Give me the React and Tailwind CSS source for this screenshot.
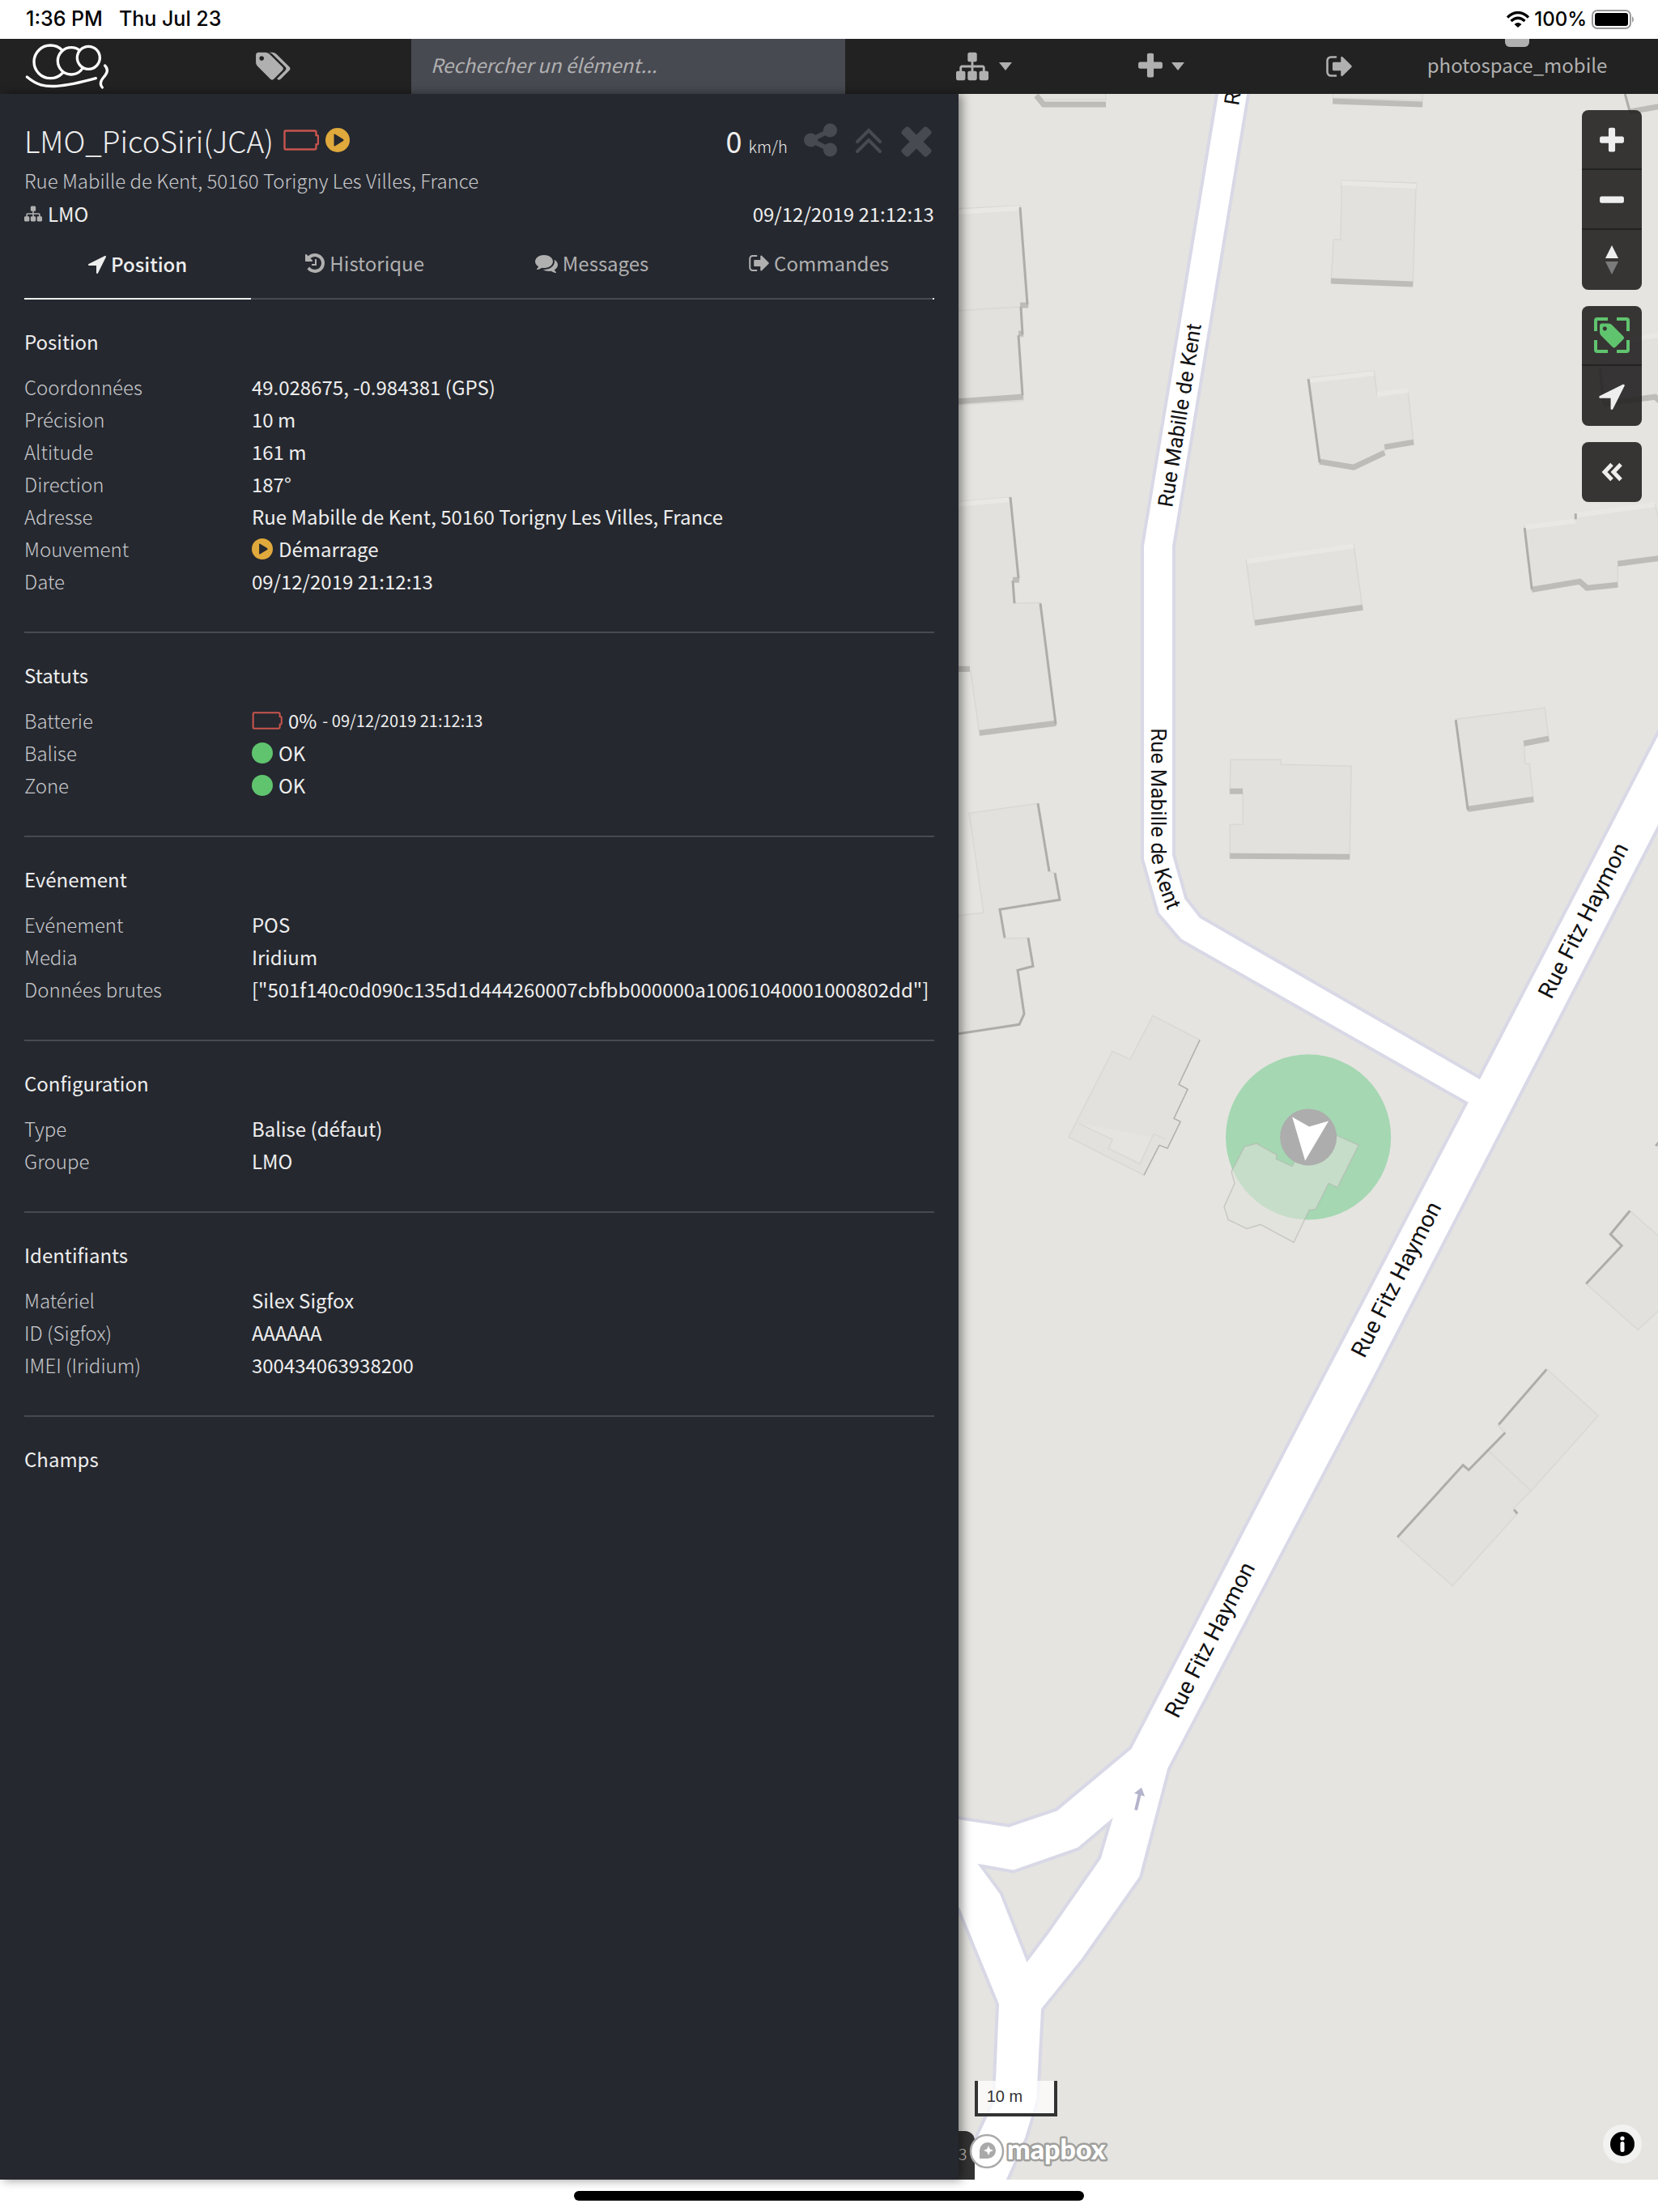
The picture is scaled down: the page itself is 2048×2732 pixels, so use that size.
const icons = {
  tags: { w: 1920, d: 'M448 448q0-53-37.5-90.5T320 320t-90.5 37.5T192 448t37.5 90.5T320 576t90.5-37.5T448 448zm1067 576q0 53-37 90l-491 492q-39 37-91 37-53 0-90-37L91 890q-38-37-64.5-101T0 672V256q0-52 38-90t90-38h416q53 0 117 26.5T763 219l715 714q37 39 37 91zm384 0q0 53-37 90l-491 492q-39 37-91 37-36 0-59-14t-53-45l470-470q37-37 37-90 0-52-37-91L923 219q-38-38-102-64.5T704 128h224q53 0 117 26.5t102 64.5l715 714q37 39 37 91z' },
  tag: { w: 1536, d: 'M448 448q0-53-37.5-90.5T320 320t-90.5 37.5T192 448t37.5 90.5T320 576t90.5-37.5T448 448zm1067 576q0 53-37 90l-491 492q-39 37-91 37-53 0-90-37L91 890q-38-37-64.5-101T0 672V256q0-52 38-90t90-38h416q53 0 117 26.5T763 219l715 714q37 39 37 91z' },
  sitemap: { w: 1792, d: 'M1792 1248v320q0 40-28 68t-68 28h-320q-40 0-68-28t-28-68v-320q0-40 28-68t68-28h96V960H960v192h96q40 0 68 28t28 68v320q0 40-28 68t-68 28H736q-40 0-68-28t-28-68v-320q0-40 28-68t68-28h96V960H320v192h96q40 0 68 28t28 68v320q0 40-28 68t-68 28H96q-40 0-68-28t-28-68v-320q0-40 28-68t68-28h96V960q0-52 38-90t90-38h512V640h-96q-40 0-68-28t-28-68V224q0-40 28-68t68-28h320q40 0 68 28t28 68v320q0 40-28 68t-68 28h-96v192h512q52 0 90 38t38 90v192h96q40 0 68 28t28 68z' },
  plus: { w: 1408, d: 'M1408 736v192q0 40-28 68t-68 28H896v416q0 40-28 68t-68 28H608q-40 0-68-28t-28-68v-416H96q-40 0-68-28t-28-68V736q0-40 28-68t68-28h416V224q0-40 28-68t68-28h192q40 0 68 28t28 68v416h416q40 0 68 28t28 68z' },
  minus: { w: 1408, d: 'M1408 736v192q0 40-28 68t-68 28H96q-40 0-68-28t-28-68V736q0-40 28-68t68-28h1216q40 0 68 28t28 68z' },
  times: { w: 1408, d: 'M1298 1322q0 40-28 68l-136 136q-28 28-68 28t-68-28l-294-294-294 294q-28 28-68 28t-68-28l-136-136q-28-28-28-68t28-68l294-294-294-294q-28-28-28-68t28-68l136-136q28-28 68-28t68 28l294 294 294-294q28-28 68-28t68 28l136 136q28 28 28 68t-28 68L976 960l294 294q28 28 28 68z' },
  signOut: { w: 1568, d: 'M640 1440q0 4 1 20t.5 26.5-3 23.5-10 19.5-20.5 6.5h-320q-119 0-203.5-84.5T0 1248V544q0-119 84.5-203.5T288 256h320q13 0 22.5 9.5T640 288q0 4 1 20t.5 26.5-3 23.5-10 19.5T608 384H288q-66 0-113 47t-47 113v704q0 66 47 113t113 47h312l11.5 1 11.5 3 8 5.5 7 9 2 13.5zm928-544q0 26-19 45l-544 544q-19 19-45 19t-45-19-19-45v-288H448q-26 0-45-19t-19-45V704q0-26 19-45t45-19h448V352q0-26 19-45t45-19 45 19l544 544q19 19 19 45z' },
  arrow: { w: 1408, d: 'M1401 345l-640 1280q-17 35-57 35-5 0-15-2-22-5-35.5-22.5T640 1596v-576H64q-22 0-39.5-13.5T2 971t4-42 29-30l1280-640q13-7 29-7 27 0 45 19 15 14 18.5 34.5T1401 345z' },
  share: { w: 1536, d: 'M1216 1024q133 0 226.5 93.5T1536 1344t-93.5 226.5T1216 1664t-226.5-93.5T896 1344q0-12 2-34l-360-180q-92 86-218 86-133 0-226.5-93.5T0 896t93.5-226.5T320 576q126 0 218 86l360-180q-2-22-2-34 0-133 93.5-226.5T1216 128t226.5 93.5T1536 448t-93.5 226.5T1216 768q-126 0-218-86L638 862q2 22 2 34t-2 34l360 180q92-86 218-86z' },
  history: { w: 1536, d: 'M1536 896q0 156-61 298t-164 245-245 164-298 61q-172 0-327-72.5T177 1387q-7-10-6.5-22.5T179 1344l137-138q10-9 25-9 16 2 23 12 73 95 179 147t225 52q104 0 198.5-40.5T1130 1258t109.5-163.5T1280 896t-40.5-198.5T1130 534 966.5 424.5 768 384q-98 0-188 35.5T420 521l137 138q31 30 14 69-17 40-59 40H64q-26 0-45-19T0 704V256q0-42 40-59 39-17 69 14l130 129q107-101 244.5-156.5T768 128q156 0 298 61t245 164 164 245 61 298zM896 608v448q0 14-9 23t-23 9H544q-14 0-23-9t-9-23v-64q0-14 9-23t23-9h224V608q0-14 9-23t23-9h64q14 0 23 9t9 23z' },
  comments: { w: 1792, d: 'M1408 768q0 139-94 257t-256.5 186.5T704 1280q-86 0-176-16-124 88-278 128-36 9-86 16h-3q-11 0-20.5-8t-11.5-21q-1-3-1-6.5t.5-6.5 2-6l2.5-5 3.5-5.5 4-5 4.5-5 4-4.5q5-6 23-25t26-29.5 22.5-29 25-38.5 20.5-44q-124-72-195-177T0 768q0-139 94-257t256.5-186.5T704 256t353.5 68.5T1314 511t94 257zm384 256q0 120-71 224.5T1526 1425q10 24 20.5 44t25 38.5 22.5 29 26 29.5 23 25q1 1 4 4.5t4.5 5 4 5 3.5 5.5l2.5 5 2 6 .5 6.5-1 6.5q-3 14-13 22t-22 7q-50-7-86-16-154-40-278-128-90 16-176 16-271 0-472-132 58 4 88 4 161 0 309-45t264-129q125-92 192-212t67-254q0-77-23-152 129 71 204 178t75 230z' },
};

function Icon({ name, className }) {
  const icon = icons[name];
  return (
    <svg viewBox={`0 0 ${icon.w} 1792`} fill="currentColor" aria-hidden="true" className={className}>
      <path d={icon.d} />
    </svg>
  );
}

function Caret() {
  return (
    <svg viewBox="0 0 16 10" fill="currentColor" aria-hidden="true" className="h-[10px] w-4">
      <path d="M0 0h16L8 10z" />
    </svg>
  );
}

function EmptyBattery({ className }) {
  return (
    <svg viewBox="0 0 44 26" fill="none" stroke="#c9544e" strokeWidth="2.4" aria-hidden="true" className={className}>
      <path d="M3 1.5h35.500q2 0 2 2v3.500h.5q2 0 2 2v7.500q0 2-2 2h-.5v4q0 2-2 2h-35.500q-1.500 0-1.500-1.500v-20q0-1.500 1.500-1.500z" />
    </svg>
  );
}

function PlayCircle({ className }) {
  return (
    <svg viewBox="0 0 30 30" aria-hidden="true" className={className}>
      <circle cx="15" cy="15" r="15" fill="#e0a93c" />
      <path d="M10.500 8.500q0-1.500 1.500-.8l10 6.200q1.300 1.100 0 2.200l-10 6.200q-1.500.7-1.500-.8z" fill="#25282f" />
    </svg>
  );
}

function Dot() {
  return <span className="size-[26px] rounded-full bg-[#60c46f]" />;
}

function Logo() {
  return (
    <svg viewBox="30 35 315 180" fill="#222" stroke="#fff" strokeWidth="10" strokeLinecap="round" aria-hidden="true" className="h-[60px] w-[105px]">
      <circle cx="127" cy="108" r="61" />
      <circle cx="204" cy="105" r="50" />
      <circle cx="268" cy="93" r="42" />
      <path d="M40 164C76 194 105 201 150 198C200 195 245 183 295 169" fill="none" />
      <path d="M329 122C343 136 336 152 325 164C311 180 311 194 319 203" fill="none" />
    </svg>
  );
}

function StatusBar() {
  return (
    <div className="flex h-12 items-center justify-between bg-white pr-7 pl-8 font-['Inter',sans-serif] text-black">
      <div className="flex gap-5 text-[25px] font-medium">
        <span>1:36 PM</span>
        <span>Thu Jul 23</span>
      </div>
      <div className="flex items-center gap-[6px]">
        <svg viewBox="0 0 28 20" aria-hidden="true" className="h-5 w-7">
          <path d="M1 7.500Q14-4.500 27 7.500M5.500 12Q14 4.500 22.500 12" fill="none" stroke="#000" strokeWidth="3.300" />
          <path d="M9.500 16Q14 12 18.500 16L14 20z" />
        </svg>
        <span className="text-2xl font-medium">100%</span>
        <svg viewBox="0 0 54 24" aria-hidden="true" className="h-6 w-[54px]">
          <rect x="1" y="1" width="47" height="22" rx="6" fill="none" stroke="#999" strokeWidth="2" />
          <rect x="4" y="4" width="41" height="16" rx="3" />
          <path d="M50 8q4 4 0 8z" fill="#999" />
        </svg>
      </div>
    </div>
  );
}

function NavBar() {
  return (
    <nav className="flex h-[68px] items-stretch bg-[#222] text-[#b0b0b0]">
      <div className="flex w-[24.8%] items-center pl-[30px]">
        <a href="#home" aria-label="Accueil"><Logo /></a>
        <a href="#tags" aria-label="Balises" className="ml-[181px]"><Icon name="tags" className="h-10 w-[43px]" /></a>
      </div>
      <input
        type="search"
        aria-label="Rechercher un élément"
        placeholder="Rechercher un élément..."
        className="w-[26.2%] bg-[#484a52] px-6 pb-1 text-2xl italic placeholder:text-[#b0b0b0] focus:outline-none"
      />
      <div className="grid flex-1 grid-cols-4 pr-16 pl-[60px]">
        <button type="button" aria-label="Groupes" className="flex items-center justify-center gap-[11px]">
          <Icon name="sitemap" className="h-10 w-11" /><Caret />
        </button>
        <button type="button" aria-label="Ajouter" className="flex items-center justify-center gap-[11px]">
          <Icon name="plus" className="h-[38px] w-[30px]" /><Caret />
        </button>
        <button type="button" aria-label="Déconnexion" className="flex items-center justify-center">
          <Icon name="signOut" className="h-9 w-[34px]" />
        </button>
        <a href="#user" className="relative flex items-center justify-center pb-1 text-2xl">
          <span className="absolute top-0 left-1/2 h-[10px] w-[30px] -translate-x-1/2 rounded-b-md bg-[#b0b0b0]" />
          photospace_mobile
        </a>
      </div>
    </nav>
  );
}

const tabs = [
  { label: 'Position', icon: 'arrow', size: 'h-7 w-[22px]' },
  { label: 'Historique', icon: 'history', size: 'h-7 w-6' },
  { label: 'Messages', icon: 'comments', size: 'h-7 w-7' },
  { label: 'Commandes', icon: 'signOut', size: 'h-7 w-[25px]' },
];

const sections = [
  {
    title: 'Position',
    rows: [
      ['Coordonnées', '49.028675, -0.984381 (GPS)'],
      ['Précision', '10 m'],
      ['Altitude', '161 m'],
      ['Direction', '187°'],
      ['Adresse', 'Rue Mabille de Kent, 50160 Torigny Les Villes, France'],
      ['Mouvement', <><PlayCircle className="size-[26px]" />Démarrage</>],
      ['Date', '09/12/2019 21:12:13'],
    ],
  },
  {
    title: 'Statuts',
    rows: [
      ['Batterie', <><EmptyBattery className="h-[22px] w-[38px]" />0% <small className="text-xl">- 09/12/2019 21:12:13</small></>],
      ['Balise', <><Dot />OK</>],
      ['Zone', <><Dot />OK</>],
    ],
  },
  {
    title: 'Evénement',
    rows: [
      ['Evénement', 'POS'],
      ['Media', 'Iridium'],
      ['Données brutes', '["501f140c0d090c135d1d444260007cbfbb000000a10061040001000802dd"]'],
    ],
  },
  {
    title: 'Configuration',
    rows: [
      ['Type', 'Balise (défaut)'],
      ['Groupe', 'LMO'],
    ],
  },
  {
    title: 'Identifiants',
    rows: [
      ['Matériel', 'Silex Sigfox'],
      ['ID (Sigfox)', 'AAAAAA'],
      ['IMEI (Iridium)', '300434063938200'],
    ],
  },
  { title: 'Champs', rows: [] },
];

function Section({ title, rows }) {
  return (
    <section className="border-t-2 border-[#484a52] pt-8 pb-[42px] first:border-t-0">
      <h2 className="mb-4 leading-10 text-[#eee]">{title}</h2>
      <dl>
        {rows.map(([label, value]) => (
          <div key={label} className="flex h-10 items-center whitespace-nowrap">
            <dt className="w-1/4 shrink-0 font-light text-[#c8c9cc]">{label}</dt>
            <dd className="flex items-center gap-[7px] text-[#eee]">{value}</dd>
          </div>
        ))}
      </dl>
    </section>
  );
}

function DetailPanel() {
  return (
    <aside className="relative z-10 w-[57.8%] shrink-0 bg-[#25282f] px-[30px] pt-[30px] text-2xl shadow-[4px_0_12px_rgba(0,0,0,0.45)]">
      <header>
        <div className="flex h-[54px] items-center justify-between">
          <div className="flex items-center gap-2">
            <h1 className="mr-1 text-[37px] leading-[54px] font-light text-[#eee]">LMO_PicoSiri(JCA)</h1>
            <EmptyBattery className="h-[26px] w-11" />
            <PlayCircle className="size-[30px]" />
          </div>
          <div className="flex items-center text-[#484a52]">
            <p className="mr-5 flex items-baseline gap-2 text-[#eee]">
              <span className="text-[36px] leading-[54px]">0</span>
              <span className="text-xl font-light">km/h</span>
            </p>
            <button type="button" aria-label="Partager"><Icon name="share" className="h-12 w-[41px]" /></button>
            <button type="button" aria-label="Réduire" className="ml-[22px]">
              <svg viewBox="0 0 34 34" fill="none" stroke="currentColor" strokeWidth="4" strokeLinecap="round" aria-hidden="true" className="size-[34px]">
                <path d="M3 19L17 5l14 14M3 31L17 17l14 14" />
              </svg>
            </button>
            <button type="button" aria-label="Fermer" className="ml-[20px]"><Icon name="times" className="h-[56px] w-11" /></button>
          </div>
        </div>
        <p className="h-12 leading-[46px] font-light text-[#c8c9cc]">Rue Mabille de Kent, 50160 Torigny Les Villes, France</p>
        <div className="flex h-8 items-center justify-between text-[#eee]">
          <p className="flex items-center gap-[7px]"><Icon name="sitemap" className="h-6 w-[22px] text-[#b0b0b0]" />LMO</p>
          <p>09/12/2019 21:12:13</p>
        </div>
      </header>
      <div role="tablist" className="mt-5 flex border-b-2 border-[#484a52]">
        {tabs.map((tab, index) => (
          <button
            key={tab.label}
            type="button"
            role="tab"
            aria-selected={index === 0}
            className={
              index === 0
                ? '-mb-[2px] flex h-[70px] flex-1 items-center justify-center gap-[6px] border-b-2 border-[#eee] pb-4 font-medium text-[#eee]'
                : '-mb-[2px] flex h-[70px] flex-1 items-center justify-center gap-[6px] pb-5 text-[#b0b0b0]'
            }
          >
            <Icon name={tab.icon} className={tab.size} />
            {tab.label}
          </button>
        ))}
        <span className="-mb-[2px] h-[2px] w-[2px] self-end bg-[#eee]" />
      </div>
      <div>
        {sections.map((section) => (
          <Section key={section.title} {...section} />
        ))}
      </div>
    </aside>
  );
}

// roof outline, then the walls that show as thin or thick shaded edges
const buildings = [
  { roof: 'M95 0L104 7H182V0', thick: 'M96 2L105 13H182' },
  { roof: 'M462 0V5L573 8V0', thick: 'M462 9L573 13' },
  { roof: 'M823 0L829 24L868 17V0', thick: 'M829 22L868 15', thin: 'M823 0L829 22' },
  { roof: 'M473 107L565 110L561 236L460 233L463 180H472z', thick: 'M460 231L561 235', light: 'M473 110L565 114' },
  { roof: 'M-4 142L76 138L86 263H76L80 300H74L80 379L-4 384M-4 268L76 263', thick: 'M-4 380L80 374M76 261H86M74 296H80', thin: 'M76 140L85 260M77 263L79 297M74 298L79 372', light: 'M-4 146L75 141' },
  { roof: 'M-4 504L64 498L75 600L67 601L70 629L101 628L121 780L26 792L15 713H-4', thick: 'M26 789L120 777M67 600H75M-4 710H14', thin: 'M64 498L74 598M67 601L69 629M101 629L120 778', light: 'M-4 507L62 501' },
  { roof: 'M432 351L513 342L517 372L555 367L562 432L526 439V446L488 464L446 457z', thick: 'M446 454L488 461L526 443M526 436L562 430', thin: 'M432 352L446 455', light: 'M432 354L513 345M517 371L555 366' },
  { roof: 'M355 575L488 556L499 637L366 656z', thick: 'M366 653L499 634', light: 'M356 577L488 558' },
  { roof: 'M699 534L762 526V520L860 507L870 545V574L814 582V608L775 613L767 604L708 614z', thick: 'M708 612L767 602L776 610L814 606M814 580L868 573', thin: 'M699 536L708 612M762 518V525', light: 'M700 535L762 527M763 520L860 507' },
  { roof: 'M786 312L868 297V376L796 385z', thick: 'M797 383L860 374L868 381', thin: 'M792 338L797 383', light: 'M800 309L868 297' },
  { roof: 'M336 822H398V828L485 830L483 944L335 943V902H351V863H335z', thick: 'M335 941L483 942M335 861H351' },
  { roof: 'M614 772L724 758L729 798L698 803L700 827H705L710 873L629 886z', thick: 'M629 883L710 871M698 802L729 796', thin: 'M614 773L629 884' },
  { roof: 'M-4 1015L31 1011L13 888L98 876L112 960L119 962L125 996L51 1007L57 1043L86 1042L92 1078L73 1082L81 1136L75 1149L-4 1161', thin: 'M98 876L112 960M119 962L125 995L51 1007L57 1042M86 1042L92 1077L73 1082L81 1136L75 1149L-4 1161' },
  { roof: 'M240 1138L298 1168L272 1223L283 1229L266 1265L274 1269L258 1302L248 1298L229 1335L136 1288L190 1182L212 1192zM148 1271L190 1291L185 1302L224 1321L241 1284L256 1291', hair: 'M298 1168L272 1223L283 1229L266 1265L274 1269L258 1302L248 1298L229 1335' },
  { roof: 'M829 1379L870 1415V1497L839 1526L775 1469L819 1422L805 1408z', thin: 'M829 1379L805 1408L819 1422L775 1469M861 1299L866 1293' },
  { roof: 'M726 1574L790 1632L707 1725L685 1747L690 1753L610 1842L542 1782L623 1692L630 1699L653 1674L675 1653L666 1644zM653 1674L707 1725', thin: 'M726 1575L667 1643M675 1653L630 1699L623 1693L542 1782M686 1748L690 1753' },
];

const streetLabels = [
  { text: 'R', x: 346, y: 15, angle: -81, size: 26 },
  { text: 'Rue Mabille de Kent', x: 264, y: 511, angle: -81, size: 26 },
  { text: 'Rue Fitz Haymon', x: 732, y: 1119, angle: -63, size: 28 },
  { text: 'Rue Fitz Haymon', x: 501, y: 1562, angle: -63, size: 28 },
  { text: 'Rue Fitz Haymon', x: 271, y: 2007, angle: -63, size: 28 },
];

function MapCanvas() {
  return (
    <svg viewBox="0 0 864 2576" preserveAspectRatio="xMinYMin slice" role="img" aria-label="Carte" className="absolute inset-0 h-full w-full font-['Roboto',sans-serif]">
      <g fill="none">
        {buildings.map((building) => (
          <g key={building.roof}>
            <path d={building.roof} fill="#e2e1dd" stroke="#d9d8d4" strokeWidth="1.5" />
            <path d={building.light} stroke="#e9e8e5" strokeWidth="6" />
            <path d={building.thick} stroke="#bebcb9" strokeWidth="7" />
            <path d={building.thin} stroke="#aeadaa" strokeWidth="3" />
            <path d={building.hair} stroke="#b2b1ae" strokeWidth="1.5" />
          </g>
        ))}
      </g>
      <path
        fill="#fff"
        stroke="#d8d8e6"
        strokeWidth="4"
        fillRule="evenodd"
        d="M320 -6L227 558V945L246 1012L274 1045L627 1246L450 1584L212 2042L121 2118L62 2138L-10 2127V2225L0 2242L48 2359L43 2477L21 2524L-6 2582H58L84 2524L98 2477L104 2365L154 2303L225 2202L260 2068L514 1584L880 875V757L643 1214L299 1016L281 993L266 940V558L359 -6zM187 2134L148 2167L68 2195L28 2188L53 2222L85 2303L110 2270L174 2178z"
      />
      <path d="M219 2119L224 2098" stroke="#b4b4cc" strokeWidth="4" />
      <path d="M226 2091L217 2098L230 2102z" fill="#b4b4cc" />
      <g fill="#111">
        {streetLabels.map(({ text, x, y, angle, size }) => (
          <text key={`${x}-${y}`} fontSize={size} transform={`translate(${x} ${y}) rotate(${angle})`}>{text}</text>
        ))}
        <path id="bend" d="M238 783V940Q241 970 270 1036" fill="none" />
        <text fontSize="26"><textPath href="#bend">Rue Mabille de Kent</textPath></text>
      </g>
      <circle cx="432" cy="1288" r="102" fill="#a4d7b2" />
      <path
        fill="#e2e1dd"
        fillOpacity="0.55"
        stroke="#b5b8b1"
        strokeOpacity="0.6"
        strokeWidth="1.5"
        d="M467 1286L494 1298L468 1350L457 1345L441 1377L433 1378L414 1418L373 1396L356 1401L333 1390L328 1374L341 1345L337 1331L353 1300L368 1296L393 1310L392 1315L412 1324L440 1270z"
      />
      <circle cx="432" cy="1288" r="35" fill="#adadad" />
      <path d="M412 1263L433 1275L457 1268L428 1317z" fill="#fff" />
    </svg>
  );
}

function ControlGroup({ children }) {
  return <div className="flex flex-col divide-y-2 divide-[#222] overflow-hidden rounded-lg bg-[#232121]/90 text-[#eee]">{children}</div>;
}

function Control({ label, children }) {
  return (
    <button type="button" aria-label={label} className="flex h-[74px] w-[74px] items-center justify-center">
      {children}
    </button>
  );
}

function MapControls() {
  return (
    <div className="absolute top-5 right-5 flex flex-col gap-5">
      <ControlGroup>
        <Control label="Zoom avant"><Icon name="plus" className="mt-1 h-[38px] w-[30px]" /></Control>
        <Control label="Zoom arrière"><Icon name="minus" className="mt-1 h-[38px] w-[30px]" /></Control>
        <Control label="Nord">
          <svg viewBox="0 0 16 36" aria-hidden="true" className="h-9 w-4">
            <path d="M0 16L8 0l8 16z" fill="#eee" />
            <path d="M0 20h16L8 36z" fill="#7c7b7b" />
          </svg>
        </Control>
      </ControlGroup>
      <ControlGroup>
        <Control label="Suivre la balise">
          <svg viewBox="0 0 44 44" aria-hidden="true" className="size-11">
            <path d="M2 17V4q0-2 2-2h13M28 2h12q2 0 2 2v13M42 28v12q0 2-2 2H28M17 42H4q-2 0-2-2V28" fill="none" stroke="#60c46f" strokeWidth="4" />
            <path transform="translate(7 5) scale(.0198)" d={icons.tag.d} fill="#60c46f" />
          </svg>
        </Control>
        <Control label="Ma position"><Icon name="arrow" className="h-10 w-8" /></Control>
      </ControlGroup>
      <ControlGroup>
        <Control label="Replier">
          <svg viewBox="0 0 28 24" fill="none" stroke="currentColor" strokeWidth="5" aria-hidden="true" className="h-6 w-7">
            <path d="M14 2.500L5 12l9 9.500M25 2.500L16 12l9 9.500" />
          </svg>
        </Control>
      </ControlGroup>
    </div>
  );
}

function MapView() {
  return (
    <main className="relative flex-1 overflow-hidden bg-[#e5e4e0]">
      <MapCanvas />
      <MapControls />
      <div className="absolute bottom-[78px] left-5 h-11 w-[102px] border-4 border-t-0 border-[#333] bg-white/75 pl-[11px] font-['Liberation_Sans',sans-serif] text-xl leading-[38px] text-[#333]">10 m</div>
      <div className="absolute bottom-0 left-0 h-[60px] w-5 rounded-tr-xl bg-[#333] text-xl leading-[56px] font-light text-[#ccc]">3</div>
      <a href="#mapbox" className="absolute bottom-3 left-3">
        <svg viewBox="0 0 190 46" className="h-[46px] w-[190px]">
          <circle cx="23" cy="23" r="20" fill="#fff" stroke="#a9a9a9" strokeWidth="2.500" />
          <path d="M14 32V22a10 10 0 1 1 10 10z" fill="#a9a9a9" />
          <path d="M25 16l1.800 4.200L31 22l-4.200 1.800L25 28l-1.800-4.200L19 22l4.200-1.800z" fill="#fff" />
          <text x="48" y="33" fontSize="34" fill="#fff" stroke="#a0a09d" strokeWidth="5" strokeLinejoin="round" paintOrder="stroke" className="font-['Lato',sans-serif] font-black">mapbox</text>
        </svg>
      </a>
      <button type="button" aria-label="Informations" className="absolute right-5 bottom-5 flex size-12 items-center justify-center rounded-full bg-white/50">
        <svg viewBox="0 0 30 30" aria-hidden="true" className="size-[30px]">
          <circle cx="15" cy="15" r="15" />
          <circle cx="15" cy="8" r="2.600" fill="#fff" />
          <path d="M15 14.500v8" stroke="#fff" strokeWidth="5" strokeLinecap="round" />
        </svg>
      </button>
    </main>
  );
}

export default function App() {
  return (
    <div className="flex min-h-screen flex-col bg-white font-['Noto_Sans_CJK_JP',sans-serif]">
      <StatusBar />
      <NavBar />
      <div className="flex flex-1">
        <DetailPanel />
        <MapView />
      </div>
      <div className="flex h-10 items-center justify-center bg-white">
        <span className="h-3 w-[630px] rounded-full bg-black" />
      </div>
    </div>
  );
}
